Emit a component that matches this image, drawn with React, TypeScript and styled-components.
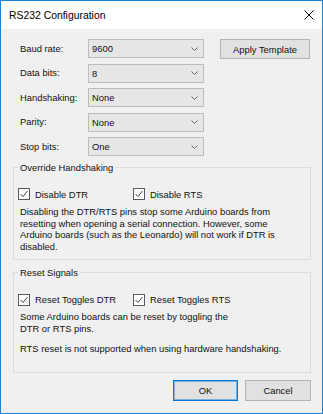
import { Fragment } from "react";
import styled, { createGlobalStyle } from "styled-components";

const GlobalStyle = createGlobalStyle`
  html, body {
    margin: 0;
    padding: 0;
    background: #ffffff;
  }
  body {
    font-family: "Liberation Sans", Arial, sans-serif;
  }
`;

const Window = styled.div`
  width: 323px;
  height: 414px;
  box-sizing: border-box;
  border: 1px solid #1883d7;
  background: #f0f0f0;
  display: flex;
  flex-direction: column;
  font-family: "Liberation Sans", Arial, sans-serif;
  font-size: 9.4px;
  color: #111;
`;

const TitleBar = styled.div`
  height: 28px;
  flex-shrink: 0;
  background: #ffffff;
  display: flex;
  align-items: center;
  justify-content: space-between;
  padding: 0 8px;
`;

const Title = styled.span`
  font-size: 10.4px;
  color: #000;
`;

const Body = styled.div`
  flex: 1;
  display: flex;
  flex-direction: column;
  padding: 10px 11px 0 12px;
`;

const FormRow = styled.div`
  display: flex;
  align-items: flex-start;
  padding-left: 7px;
`;

const FieldGrid = styled.div`
  display: grid;
  grid-template-columns: 68px 116px;
  row-gap: 5.5px;
  align-items: center;
`;

const FieldLabel = styled.label`
  line-height: 12px;
`;

const Select = styled.div`
  height: 19px;
  box-sizing: border-box;
  border: 1px solid #bcbcbc;
  background: #e6e6e6;
  display: flex;
  align-items: center;
  justify-content: space-between;
  padding: 0 5px 0 3px;
`;

const Button = styled.button<{ $width: number; $default?: boolean }>`
  width: ${(p) => p.$width}px;
  height: 21px;
  box-sizing: border-box;
  background: #e1e1e1;
  border: 1px solid ${(p) => (p.$default ? "#0078d7" : "#b4b4b4")};
  box-shadow: ${(p) => (p.$default ? "inset 0 0 0 1px rgba(0, 120, 215, 0.45)" : "none")};
  font-family: inherit;
  font-size: 9.4px;
  color: #111;
  padding: 0;
  margin: 0;
`;

const ApplyButton = styled(Button)`
  height: 20px;
  margin-left: 16px;
`;

const Group = styled.fieldset<{ $top: number; $bottom: number }>`
  margin: ${(p) => p.$top}px 0 0 0;
  border: 1px solid #dcdcdc;
  padding: 13.5px 4px ${(p) => p.$bottom}px 4px;
  min-width: 0;
`;

const GroupTitle = styled.legend`
  padding: 0 2px;
  line-height: 13px;
`;

const CheckRow = styled.div`
  display: grid;
  grid-template-columns: 115px auto;
  height: 14px;
  align-items: center;
`;

const CheckItem = styled.label`
  display: flex;
  align-items: center;
  gap: 5px;
`;

const Box = styled.span`
  width: 12px;
  height: 12px;
  box-sizing: border-box;
  border: 1px solid #5a5a5a;
  background: #fff;
  display: flex;
  align-items: center;
  justify-content: center;
`;

const Note = styled.p<{ $width: number; $top: number }>`
  margin: ${(p) => p.$top}px 0 0 2px;
  width: ${(p) => p.$width}px;
  line-height: 11.7px;
`;

const Footer = styled.div`
  display: flex;
  justify-content: flex-end;
  gap: 7px;
  margin-top: 7px;
`;

const Chevron = () => (
  <svg width="7" height="4" viewBox="0 0 7 4">
    <path d="M0.5 0.5 L3.5 3.5 L6.5 0.5" fill="none" stroke="#6a6a6a" strokeWidth="1" />
  </svg>
);

const CloseIcon = () => (
  <svg width="10" height="10" viewBox="0 0 10 10">
    <path d="M0.5 0.5 L9.5 9.5 M9.5 0.5 L0.5 9.5" stroke="#000" strokeWidth="1" />
  </svg>
);

const Check = ({ label }: { label: string }) => (
  <CheckItem>
    <Box>
      <svg width="10" height="10" viewBox="0 0 10 10">
        <path d="M1.5 5 L4 7.5 L8.5 2" fill="none" stroke="#444" strokeWidth="1" />
      </svg>
    </Box>
    <span>{label}</span>
  </CheckItem>
);

const fields = [
  { label: "Baud rate:", value: "9600" },
  { label: "Data bits:", value: "8" },
  { label: "Handshaking:", value: "None" },
  { label: "Parity:", value: "None" },
  { label: "Stop bits:", value: "One" },
];

const App = () => {
  return (
    <>
      <GlobalStyle />
      <Window>
        <TitleBar>
          <Title>RS232 Configuration</Title>
          <CloseIcon />
        </TitleBar>

        <Body>
          <FormRow>
            <FieldGrid>
              {fields.map((f) => (
                <Fragment key={f.label}>
                  <FieldLabel>{f.label}</FieldLabel>
                  <Select>
                    <span>{f.value}</span>
                    <Chevron />
                  </Select>
                </Fragment>
              ))}
            </FieldGrid>
            <ApplyButton $width={90}>Apply Template</ApplyButton>
          </FormRow>

          <Group $top={4.5} $bottom={6}>
            <GroupTitle>Override Handshaking</GroupTitle>
            <CheckRow>
              <Check label="Disable DTR" />
              <Check label="Disable RTS" />
            </CheckRow>
            <Note $width={264} $top={5}>
              Disabling the DTR/RTS pins stop some Arduino boards from resetting when opening a
              serial connection. However, some Arduino boards (such as the Leonardo) will not work
              if DTR is disabled.
            </Note>
          </Group>

          <Group $top={6.5} $bottom={18}>
            <GroupTitle>Reset Signals</GroupTitle>
            <CheckRow>
              <Check label="Reset Toggles DTR" />
              <Check label="Reset Toggles RTS" />
            </CheckRow>
            <Note $width={222} $top={4.5}>
              Some Arduino boards can be reset by toggling the DTR or RTS pins.
            </Note>
            <Note $width={280} $top={7.8}>
              RTS reset is not supported when using hardware handshaking.
            </Note>
          </Group>

          <Footer>
            <Button $width={65} $default>
              OK
            </Button>
            <Button $width={66}>Cancel</Button>
          </Footer>
        </Body>
      </Window>
    </>
  );
};

export default App;
